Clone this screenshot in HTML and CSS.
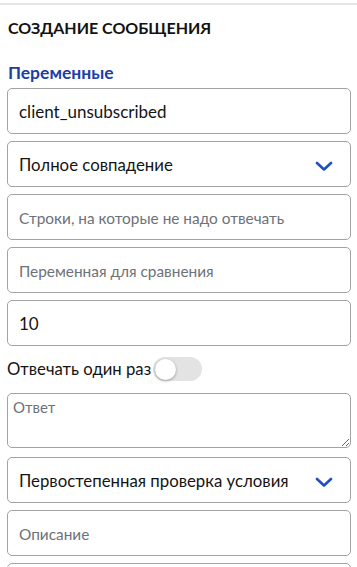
FILE: index.html
```html
<!DOCTYPE html>
<html lang="ru">
<head>
<meta charset="utf-8">
<title>Создание сообщения</title>
<link rel="stylesheet" href="styles.css">
</head>
<body>
<div class="topbar"></div>
<main class="form">
  <h2 class="title">СОЗДАНИЕ СООБЩЕНИЯ</h2>
  <div class="label">Переменные</div>
  <input class="input" type="text" value="client_unsubscribed">
  <div class="input select">
    <span class="select-text">Полное совпадение</span>
    <svg class="chevron" width="18" height="10" viewBox="0 0 18 10"><path d="M2 2 L9 8.5 L16 2" fill="none" stroke="#1f4fc2" stroke-width="2.6" stroke-linecap="round" stroke-linejoin="round"/></svg>
  </div>
  <input class="input" type="text" placeholder="Строки, на которые не надо отвечать">
  <input class="input" type="text" placeholder="Переменная для сравнения">
  <input class="input" type="text" value="10">
  <label class="toggle-row">
    <span class="toggle-text">Отвечать один раз</span>
    <span class="switch"><span class="knob"></span></span>
  </label>
  <textarea class="textarea" placeholder="Ответ"></textarea>
  <div class="input select select-2">
    <span class="select-text">Первостепенная проверка условия</span>
    <svg class="chevron" width="18" height="10" viewBox="0 0 18 10"><path d="M2 2 L9 8.5 L16 2" fill="none" stroke="#1f4fc2" stroke-width="2.6" stroke-linecap="round" stroke-linejoin="round"/></svg>
  </div>
  <input class="input" type="text" placeholder="Описание">
  <input class="input" type="text" placeholder="">
</main>
</body>
</html>
```
FILE: styles.css
```css
html, body {
  margin: 0;
  padding: 0;
  background: #ffffff;
}
body {
  font-family: Lato, "Noto Sans", sans-serif;
  color: #141414;
  overflow: hidden;
  height: 567px;
}
.topbar {
  height: 3px;
  border-bottom: 2px solid #e2e5ea;
}
.form {
  display: flex;
  flex-direction: column;
  padding: 0 6px 0 7px;
}
.title {
  margin: 12px 0 0 1px;
  font-size: 16px;
  font-weight: 700;
  line-height: 22px;
  color: #121212;
}
.label {
  margin: 23px 0 0 1px;
  font-size: 17.5px;
  font-weight: 700;
  line-height: 22px;
  color: #1c3ea6;
}
.input {
  box-sizing: border-box;
  width: 100%;
  height: 46px;
  margin: 0 0 7px 0;
  padding: 0 11px;
  border: 1px solid #a3a3a3;
  border-radius: 5px;
  font-family: inherit;
  font-size: 17px;
  color: #141414;
  background: #fff;
  outline: none;
}
.form > .label + .input {
  margin-top: 4px;
}
.input::placeholder {
  color: #6d7278;
  font-size: 15.4px;
}
.select {
  display: flex;
  align-items: center;
  justify-content: space-between;
  padding-right: 17px;
}
.select-text {
  font-size: 16.8px;
}
.chevron {
  display: block;
  margin-top: 4px;
}
.toggle-row {
  display: flex;
  align-items: center;
  gap: 2px;
  height: 28px;
  margin: 2px 0 10px 0;
  font-size: 16.7px;
}
.switch {
  display: flex;
  align-items: center;
  width: 49px;
  height: 24px;
  border-radius: 12px;
  background: #e3e3e3;
  padding: 0 2px;
  box-sizing: border-box;
}
.knob {
  width: 21px;
  height: 21px;
  border-radius: 50%;
  background: #fff;
  box-shadow: 0 1px 3px rgba(0,0,0,0.35);
}
.textarea {
  box-sizing: border-box;
  width: 100%;
  height: 55px;
  margin: 0 0 9px 0;
  padding: 4px 5px;
  border: 1px solid #a3a3a3;
  border-radius: 5px;
  font-family: inherit;
  font-size: 15px;
  resize: vertical;
  outline: none;
}
.textarea::placeholder {
  color: #6d7278;
}
```
